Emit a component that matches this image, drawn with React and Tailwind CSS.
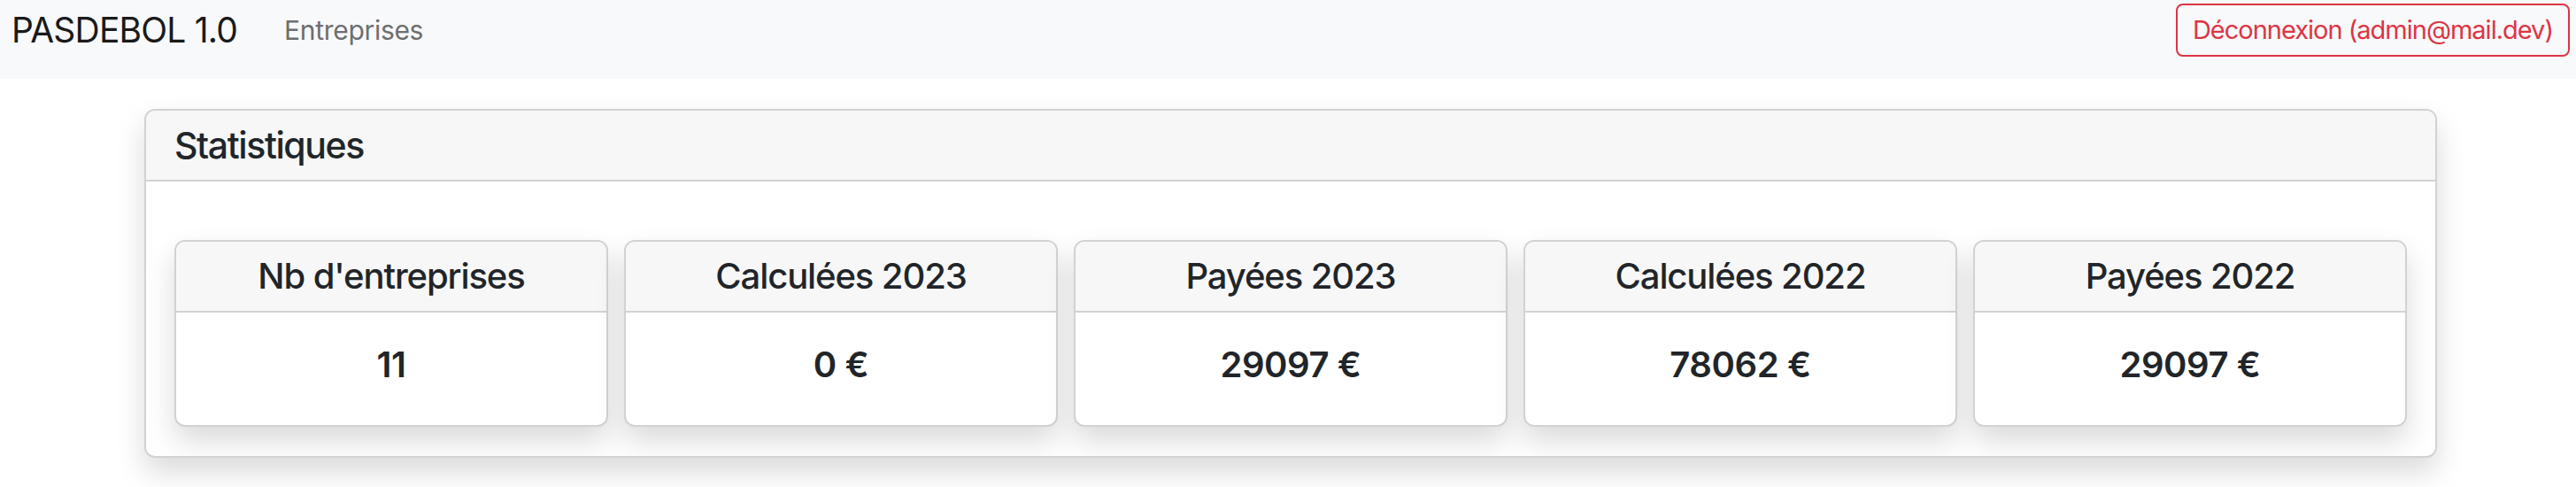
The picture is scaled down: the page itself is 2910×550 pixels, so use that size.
import React from "react";

const stats = [
  { label: "Nb d'entreprises", value: "11" },
  { label: "Calculées 2023", value: "0 €" },
  { label: "Payées 2023", value: "29097 €" },
  { label: "Calculées 2022", value: "78062 €" },
  { label: "Payées 2022", value: "29097 €" },
];

export default function App() {
  return (
    <div className="w-full h-[550px] bg-white text-[#212529]" style={{ fontFamily: "Inter, 'Noto Sans', sans-serif" }}>
      <nav className="h-[89px] bg-[#f8f9fa] flex items-start justify-between pt-[4px] pl-[13px] pr-[7px]">
        <div className="flex items-center h-[60px]">
          <span className="text-[39px] leading-[60px] text-[#1a1a1a] tracking-[-0.8px]">PASDEBOL 1.0</span>
          <span className="ml-[53px] text-[30px] leading-[60px] text-[#6d6e70] tracking-[-0.3px]">Entreprises</span>
        </div>
        <button className="h-[60px] px-[17px] border-2 border-[#dc3545] rounded-[8px] text-[#dc3545] text-[29px] leading-[56px] tracking-[-1px]">
          Déconnexion (admin@mail.dev)
        </button>
      </nav>
      <div className="ml-[163px] mt-[34px] w-[2590px]">
        <div className="border-2 border-[#d2d2d2] rounded-[12px] bg-white shadow-[0_16px_33px_rgba(0,0,0,0.15)] overflow-hidden">
          <div className="h-[80px] bg-[#f7f7f7] border-b-2 border-[#d2d2d2] px-[32px] flex items-center">
            <span className="text-[41px] font-medium leading-none tracking-[-1.4px]">Statistiques</span>
          </div>
          <div className="px-[32px] pt-[66px] pb-[33px]">
            <div className="flex gap-[18px]">
              {stats.map((s) => (
                <div key={s.label} className="flex-1 h-[211px] border-2 border-[#d2d2d2] rounded-[12px] bg-white shadow-[0_16px_33px_rgba(0,0,0,0.15)] overflow-hidden flex flex-col">
                  <div className="h-[80px] bg-[#f7f7f7] border-b-2 border-[#d2d2d2] flex items-center justify-center">
                    <span className="text-[40px] font-medium leading-none tracking-[-1.1px]">{s.label}</span>
                  </div>
                  <div className="flex-1 flex items-center justify-center pb-[10px]">
                    <span className="text-[40px] font-semibold leading-none tracking-[-0.4px]">{s.value}</span>
                  </div>
                </div>
              ))}
            </div>
          </div>
        </div>
      </div>
    </div>
  );
}
